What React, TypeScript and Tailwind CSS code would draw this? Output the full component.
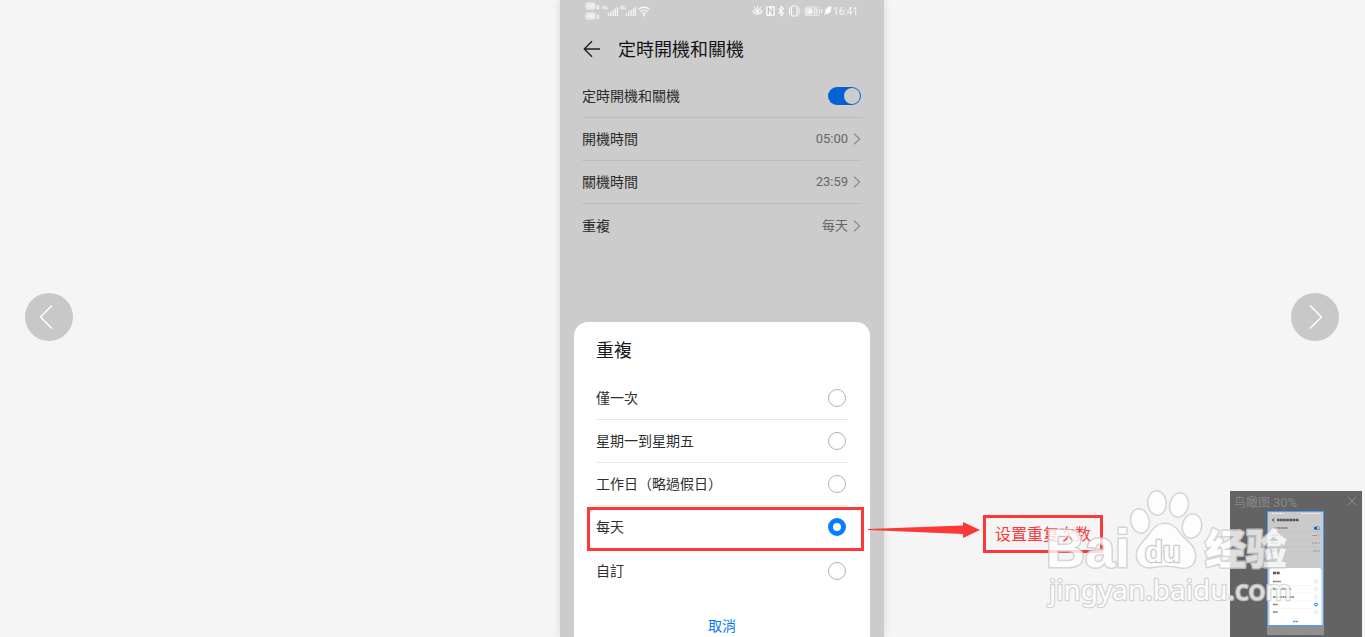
import React, { useState } from "react";

const repeatOptions = ["僅一次", "星期一到星期五", "工作日（略過假日）", "每天", "自訂"];

function NetworkIcons() {
  return (
    <svg width="66" height="20" viewBox="0 0 66 20" fill="none" aria-hidden="true">
      {[2, 12].map((y) => (
        <g key={y}>
          <rect x="1" y={y} width="9" height="6" rx="1.2" fill="#dedede" stroke="#f2f2f2" />
          <path
            d={`M3 ${y + 1.5}v3M5 ${y + 1.5}v3M3 ${y + 3}h2M6.7 ${y + 1.5}v3h.8q1 0 1-1.5t-1-1.5z`}
            stroke="#ffffff"
            strokeWidth="0.8"
          />
          <path d={`M12 ${y + 6}v-3.500h1.700v3.500z`} stroke="#f2f2f2" />
        </g>
      ))}
      {[17, 35].map((x) => (
        <g key={x}>
          <path
            d={`M${x + 1.8} 4.5v4M${x + 1.8} 4.5l-1.6 2.6h2.4M${x + 5.2} 5h-1.6v3h1.8v-1.4h-.8`}
            stroke="#f2f2f2"
            strokeWidth="0.9"
          />
          <path
            d={`M${x + 6.5} 15v-2.5M${x + 8.8} 15v-4.5M${x + 11.1} 15v-6M${x + 13.4} 15v-7.5M${x + 15.4} 15v-9`}
            stroke="#f5f5f5"
            strokeWidth="1.3"
          />
        </g>
      ))}
      <path
        d="M53.500 8.500q5.500-4.500 11 0M55.300 10.700q3.700-3 7.400 0M57.200 12.800q1.800-1.400 3.700 0"
        stroke="#f7f7f7"
        strokeWidth="1.3"
      />
      <circle cx="59" cy="14.500" r="1" fill="#fff" />
    </svg>
  );
}

function DeviceIcons() {
  return (
    <svg width="80" height="12" viewBox="0 0 80 12" fill="none" stroke="#fafafa" aria-hidden="true">
      <path d="M.8 6.500q4.700-5.500 9.400 0q-4.700 6-9.400 0zM5.500 1v2M2 2l1.200 1.500M9 2l-1.200 1.500" strokeWidth="1.100" />
      <circle cx="5.500" cy="6.500" r="1.500" fill="#fff" />
      <rect x="14" y="1" width="9" height="10" rx="1" fill="#f5f5f5" stroke="none" />
      <path d="M16.300 9.500V3l4.400 6V2.500" stroke="#bdbdbd" strokeWidth="1.100" />
      <path d="M26.500 3.500l5 5L29 10.800V1.200l2.500 2.300-5 5" strokeWidth="1.100" />
      <rect x="39.500" y="1" width="5.500" height="10" rx="1" strokeWidth="1.100" />
      <path d="M37.500 2.500v7M47 2.500v7" strokeWidth="1.100" />
      <rect x="53" y="2" width="14.500" height="8.500" rx="1.500" fill="#d2d2d2" stroke="#e6e6e6" />
      <rect x="53.500" y="2.500" width="5" height="7.500" fill="#e9e9e9" stroke="none" />
      <path d="M59.300 9V3.500l-2.600 3.700h3.800" stroke="#ffffff" />
      <rect x="62.300" y="3.800" width="2.600" height="4.900" rx="1.300" stroke="#ffffff" />
      <path d="M69.500 4.500v3.500" strokeWidth="1.200" />
      <path d="M72 10l1.500-1.500q-1-5.500 5.500-7q.5 7.500-5.500 7" fill="#fff" strokeWidth=".9" />
    </svg>
  );
}

function Chevron() {
  return (
    <svg width="8" height="12" viewBox="0 0 8 12" fill="none" stroke="#8c8c8c" strokeWidth="1.2" aria-hidden="true">
      <path d="M1 0.700 6.700 6 1 11.300" />
    </svg>
  );
}

function SettingRow({ label, value, last }: { label: string; value: string; last?: boolean }) {
  return (
    <button
      type="button"
      className={`flex h-[43px] w-full items-center justify-between pr-px text-left ${last ? "" : "border-b border-[#bdbdbd]"}`}
    >
      <span className="text-sm text-[#2b2b2b]">{label}</span>
      <span className="flex items-center gap-[5px] text-[13px] text-[#666666]">
        {value}
        <Chevron />
      </span>
    </button>
  );
}

function RepeatSheet() {
  const [selected, setSelected] = useState("每天");
  return (
    <fieldset className="mx-[14px] mt-[75px] min-w-0 flex-1 rounded-t-[14px] bg-white px-[22px]">
      <h2 className="flex h-[55px] items-center pt-0.5 text-lg text-[#1a1a1a]">重複</h2>
      {repeatOptions.map((option, index) => (
        <label
          key={option}
          className={`relative flex h-[43px] items-center justify-between text-sm text-[#2e2e2e] ${
            index < repeatOptions.length - 1 ? "border-b border-[#e8e8e8]" : ""
          }`}
        >
          {option}
          <input
            type="radio"
            name="repeat"
            checked={selected === option}
            onChange={() => setSelected(option)}
            className="mr-[2px] size-[18px] appearance-none rounded-full border border-[#b3b3b3] checked:border-[5px] checked:border-[#067dff]"
          />
          {option === "每天" && (
            <span className="pointer-events-none absolute top-px right-[-16px] bottom-[-3px] left-[-9px] border-3 border-[#fc3838]" />
          )}
        </label>
      ))}
      <div className="mt-[22px] flex h-[24px] items-center justify-center">
        <button type="button" className="text-sm text-[#067be8]">
          取消
        </button>
      </div>
    </fieldset>
  );
}

function PhoneScreen() {
  const [enabled, setEnabled] = useState(true);
  return (
    <main className="flex h-full flex-col bg-[#cccccc] shadow-[0_0_8px_rgba(0,0,0,0.12)]">
      <div className="flex h-[22px] shrink-0 items-center justify-between pr-[26px] pl-[25px]">
        <NetworkIcons />
        <div className="flex items-center gap-px text-[10px] text-[#f7f7f7]">
          <DeviceIcons />
          16:41
        </div>
      </div>
      <header className="flex h-[53px] shrink-0 items-center gap-4 px-[22px]">
        <button type="button" aria-label="返回">
          <svg width="20" height="18" viewBox="0 0 20 18" fill="none" stroke="#202020" strokeWidth="1.4">
            <path d="M18 9H2.500M10 1.300 2.300 9l7.700 7.700" />
          </svg>
        </button>
        <h1 className="pt-0.5 text-lg text-[#141414]">定時開機和關機</h1>
      </header>
      <section className="px-[22px]">
        <label className="flex h-[43px] items-center justify-between border-b border-[#bdbdbd] pr-px text-sm text-[#2b2b2b]">
          定時開機和關機
          <input
            type="checkbox"
            role="switch"
            checked={enabled}
            onChange={() => setEnabled(!enabled)}
            className="flex h-[18px] w-[33px] appearance-none items-center rounded-full bg-[#999999] p-px before:size-4 before:rounded-full before:bg-[#cccccc] checked:justify-end checked:bg-[#0463d2]"
          />
        </label>
        <SettingRow label="開機時間" value="05:00" />
        <SettingRow label="關機時間" value="23:59" />
        <SettingRow label="重複" value="每天" last />
      </section>
      <RepeatSheet />
    </main>
  );
}

function NavButton({ direction }: { direction: "prev" | "next" }) {
  return (
    <button
      type="button"
      aria-label={direction === "prev" ? "上一张" : "下一张"}
      className="flex size-12 items-center justify-center rounded-full bg-[#c8c8c8]"
    >
      <svg width="26" height="26" viewBox="0 0 26 26" fill="none" stroke="#fff" strokeWidth="1.5">
        <path d={direction === "prev" ? "M16 1.500 4.500 13 16 24.500" : "M8 1.500 19.500 13 8 24.500"} />
      </svg>
    </button>
  );
}

function Annotation() {
  return (
    <div className="absolute top-[515px] left-full -ml-4 flex items-start">
      <svg width="115" height="30" viewBox="0 0 115 30" aria-hidden="true">
        <path d="M0 14 95 10.500V7l17 8-17 8v-4L0 15z" fill="#fc3838" />
      </svg>
      <p className="flex h-[38px] w-[120px] items-center justify-center border-3 border-[#fc3838] pt-0.5 text-base whitespace-nowrap text-[#fc3838]">
        设置重复次数
      </p>
    </div>
  );
}

function Overview() {
  return (
    <aside className="absolute right-[3px] bottom-0 flex h-[146px] w-[132px] flex-col bg-[#636363]">
      <div className="flex h-5 shrink-0 items-center justify-between pr-[5px] pl-1 text-[#888888]">
        <span className="pt-1 text-[12px]">
          鸟瞰图 <span className="text-[13px]">30%</span>
        </span>
        <button type="button" aria-label="关闭">
          <svg width="10" height="10" viewBox="0 0 10 10" stroke="#929292" strokeWidth="1">
            <path d="M1 1l8 8M9 1 1 9" />
          </svg>
        </button>
      </div>
      <svg className="ml-[37px]" width="57" height="126" viewBox="0 0 57 126" fill="none" aria-hidden="true">
        <rect y="0" width="57" height="124" fill="#909090" />
        <rect width="57" height="115" fill="#cacaca" />
        <path d="M5 2.500h12M34 2.500h19" stroke="#eee" strokeDasharray="2 .7" />
        <path d="M7.500 7 5 9l2.500 2M5 9h3" stroke="#444" strokeWidth=".6" />
        <path d="M10 9h22" stroke="#505050" strokeWidth="2.300" strokeDasharray="2.600 .5" />
        <path d="M4 17h17M4 24.500h8M4 32h8M4 40h5" stroke="#777" strokeWidth="1.600" strokeDasharray="2 .4" />
        <path d="M4 20.500h49M4 28.300h49M4 36h49" stroke="#bdbdbd" strokeWidth=".5" />
        <path d="M45 24.500h6M45 32h6M46 40h5" stroke="#929292" strokeDasharray="1.500 .4" />
        <path d="m52 23.500 1 1-1 1M52 31l1 1-1 1M52 39l1 1-1 1" stroke="#888" strokeWidth=".5" />
        <rect x="47" y="15.500" width="6" height="3.300" rx="1.600" fill="#0463d2" />
        <circle cx="51.300" cy="17.100" r="1.400" fill="#ccc" />
        <path d="M2.500 114V60q0-3 3-3h46q3 0 3 3v54z" fill="#fff" />
        <path d="M6 62h7" stroke="#555" strokeWidth="2.500" strokeDasharray="3 .6" />
        <path d="M6 70.500h8M6 78h18M6 86h21M6 93.500h5M6 101h5" stroke="#777" strokeWidth="1.600" strokeDasharray="2 .4" />
        <path d="M6 74.500h45M6 82h45M6 90h45M6 97.500h45" stroke="#eee" strokeWidth=".5" />
        {[70.5, 78, 86, 101].map((y) => (
          <circle key={y} cx="49" cy={y} r="1.600" stroke="#c6c6c6" strokeWidth=".5" />
        ))}
        <circle cx="49" cy="93.500" r="1.400" stroke="#067dff" strokeWidth="1" />
        <path d="M26 110.500h5" stroke="#439bea" strokeWidth="1.700" strokeDasharray="2.200 .4" />
        <rect x=".5" y=".5" width="56" height="114" stroke="#4a9df8" />
        <circle cx="28.500" cy="121" r="1.200" stroke="#858585" strokeWidth=".5" />
        <path d="M15 120h2v2h-2zM41 120v2l-2-1z" stroke="#858585" strokeWidth=".5" />
      </svg>
    </aside>
  );
}

function Watermark() {
  return (
    <svg
      className="pointer-events-none absolute right-[69px] bottom-[23px] opacity-80"
      width="252"
      height="126"
      viewBox="0 0 252 126"
      fill="#fff"
      stroke="#cccccc"
      strokeWidth="3"
      strokeLinejoin="round"
      paintOrder="stroke"
      role="img"
      aria-label="Baidu 经验"
    >
      <text x="2" y="79" fontSize="54" fontFamily="'Liberation Sans', sans-serif" fontWeight="700">
        Bai
      </text>
      <ellipse cx="96" cy="33" rx="8.500" ry="11.500" transform="rotate(-12 96 33)" />
      <ellipse cx="113" cy="15" rx="8.500" ry="11.500" transform="rotate(-4 113 15)" />
      <ellipse cx="135" cy="17" rx="8.500" ry="11.500" transform="rotate(12 135 17)" />
      <ellipse cx="148" cy="38" rx="9" ry="11.500" transform="rotate(10 148 38)" />
      <path d="M121 36c7 0 11 4 15 10c5 7 15 11 15 22c0 10-8 13-16 11c-9-2-18-2-27 0c-9 1-15-4-15-12c0-9 8-13 13-21c4-6 8-10 15-10z" />
      <text
        x="101"
        y="74"
        fontSize="29"
        fontFamily="'Liberation Sans', sans-serif"
        fontWeight="700"
        stroke="#bdbdbd"
        strokeWidth="2.500"
      >
        du
      </text>
      <text x="161" y="76" fontSize="41" fontFamily="'Noto Sans CJK SC', sans-serif" fontWeight="900">
        经验
      </text>
      <text x="5" y="112" fontSize="28" fontFamily="'Noto Sans', 'Open Sans', sans-serif" strokeWidth="2.500">
        jingyan.baidu.com
      </text>
    </svg>
  );
}

export default function App() {
  return (
    <div
      lang="zh-Hant"
      className="relative grid h-screen grid-cols-[560fr_324px_481fr] overflow-hidden bg-[#f5f5f5] font-['Roboto','Noto_Sans_CJK_TC',sans-serif]"
    >
      <div className="flex items-center pb-1 pl-[25px]">
        <NavButton direction="prev" />
      </div>
      <div className="relative h-screen">
        <PhoneScreen />
        <Annotation />
      </div>
      <div className="flex items-center justify-end pr-[26px] pb-1">
        <NavButton direction="next" />
      </div>
      <Overview />
      <Watermark />
    </div>
  );
}
